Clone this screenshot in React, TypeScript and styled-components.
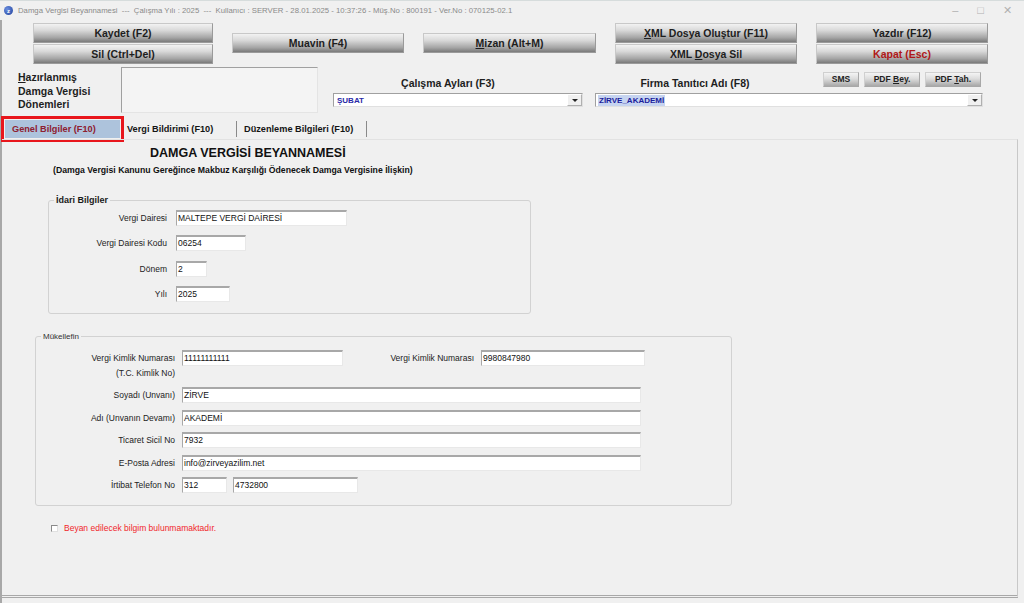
import React from "react";
import styled, { createGlobalStyle } from "styled-components";

const GlobalStyle = createGlobalStyle`
  html, body {
    margin: 0;
    padding: 0;
    background: #f0f0f0;
  }
  body {
    font-family: "Liberation Sans", Arial, sans-serif;
    color: #1a1a1a;
  }
  * {
    box-sizing: border-box;
  }
`;

const Window = styled.div`
  width: 1024px;
  height: 603px;
  background: #f0f0f0;
  display: flex;
  flex-direction: column;
  overflow: hidden;
`;

const TitleBar = styled.div`
  height: 20px;
  display: flex;
  align-items: center;
  padding: 0 4px;
  border-top: 1px solid #d6dcdc;
  font-size: 7.75px;
  color: #8a8a8a;
  > span.caption {
    margin-left: 5px;
  }
  > .controls {
    margin-left: auto;
    display: flex;
    gap: 19px;
    padding-right: 8px;
    color: #b0b0b0;
    font-size: 11px;
  }
`;

const AppIcon = styled.div`
  width: 9px;
  height: 9px;
  border-radius: 50%;
  background: radial-gradient(circle at 35% 35%, #6a8ee0, #1d3f9a);
  color: #fff;
  font-size: 6px;
  font-weight: bold;
  display: flex;
  align-items: center;
  justify-content: center;
`;

const Body = styled.div`
  flex: 1;
  display: flex;
  flex-direction: column;
  border-left: 2px solid #a8a8a8;
  min-height: 0;
`;

const Toolbar = styled.div`
  display: flex;
  align-items: center;
  gap: 19px;
  margin-top: 2px;
  padding-left: 31px;
  height: 42px;
`;

const ButtonStack = styled.div<{ $w: number }>`
  width: ${(p) => p.$w}px;
  display: flex;
  flex-direction: column;
  gap: 1px;
`;

const BigButton = styled.button<{ $danger?: boolean }>`
  height: 20px;
  width: 100%;
  border: 1px solid #9a9a9a;
  border-top-color: #c8c8c8;
  border-left-color: #c8c8c8;
  background: linear-gradient(to bottom, #f2f2f2 0%, #d9d9d9 35%, #a6a6a6 75%, #7a7a7a 100%);
  font-family: "Liberation Sans", Arial, sans-serif;
  font-weight: bold;
  font-size: 10.5px;
  color: ${(p) => (p.$danger ? "#b01818" : "#1e1e1e")};
  padding: 0;
  cursor: default;
`;

const SmallButton = styled.button<{ $w: number }>`
  width: ${(p) => p.$w}px;
  height: 15px;
  border: 1px solid #a8a8a8;
  border-top-color: #d0d0d0;
  border-left-color: #d0d0d0;
  background: linear-gradient(to bottom, #f4f4f4 0%, #dcdcdc 45%, #a8a8a8 100%);
  font-family: "Liberation Sans", Arial, sans-serif;
  font-weight: bold;
  font-size: 8.5px;
  color: #222;
  padding: 0;
`;

const HeaderRow = styled.div`
  display: flex;
  height: 46px;
  margin-top: 3px;
`;

const PeriodLabel = styled.div`
  width: 119px;
  padding-left: 16px;
  padding-top: 4px;
  font-weight: bold;
  font-size: 10.5px;
  line-height: 13.5px;
  color: #1e1e1e;
`;

const PeriodList = styled.div`
  width: 197px;
  height: 46px;
  background: #f4f4f4;
  border-top: 1px solid #a0a0a0;
  border-left: 1px solid #a0a0a0;
  border-right: 1px solid #e4e4e4;
  border-bottom: 1px solid #e4e4e4;
`;

const FieldBlock = styled.div<{ $w: number; $ml: number }>`
  width: ${(p) => p.$w}px;
  margin-left: ${(p) => p.$ml}px;
  display: flex;
  flex-direction: column;
`;

const BlockTop = styled.div`
  height: 26px;
  display: flex;
  align-items: center;
  padding-top: 6px;
`;

const BlockLabel = styled.div<{ $pr?: number }>`
  flex: 1;
  text-align: center;
  padding-right: ${(p) => p.$pr ?? 0}px;
  font-weight: bold;
  font-size: 10.5px;
  color: #1e1e1e;
`;

const SmallButtons = styled.div`
  display: flex;
  gap: 5px;
  margin-right: 2px;
  margin-top: -8px;
`;

const Select = styled.div`
  height: 14px;
  display: flex;
  align-items: stretch;
  background: #fff;
  border-top: 1px solid #a0a0a0;
  border-left: 1px solid #a0a0a0;
  border-right: 1px solid #e0e0e0;
  border-bottom: 1px solid #e0e0e0;
`;

const SelectValue = styled.div`
  flex: 1;
  display: flex;
  align-items: center;
  padding-left: 2px;
  > span {
    font-size: 8px;
    font-weight: bold;
    color: #2a2aa8;
    line-height: 11px;
    padding: 0 1px;
  }
  > span.selected {
    background: #c6d4f0;
    color: #1c1c9c;
  }
`;

const SelectArrow = styled.div`
  width: 15px;
  border: 1px solid #b0b0b0;
  border-top-color: #fff;
  border-left-color: #fff;
  background: #f0f0f0;
  display: flex;
  align-items: center;
  justify-content: center;
  &::after {
    content: "";
    border-left: 3px solid transparent;
    border-right: 3px solid transparent;
    border-top: 3px solid #222;
  }
`;

const TabStrip = styled.div`
  display: flex;
  align-items: center;
  height: 21px;
  margin-top: 5px;
  padding-left: 3px;
`;

const Tab = styled.div<{ $active?: boolean; $w: number }>`
  width: ${(p) => p.$w}px;
  margin-left: ${(p) => (p.$active ? 0 : 3)}px;
  height: ${(p) => (p.$active ? "18px" : "16px")};
  display: flex;
  align-items: center;
  padding-left: ${(p) => (p.$active ? "7px" : "4px")};
  font-weight: bold;
  font-size: 9.2px;
  color: ${(p) => (p.$active ? "#8e2030" : "#151515")};
  background: ${(p) => (p.$active ? "#adc3dc" : "transparent")};
  outline: ${(p) => (p.$active ? "3px solid #e8161c" : "none")};
  outline-offset: 1px;
  border-right: ${(p) => (p.$active ? "none" : "1px solid #8a8a8a")};
`;

const Panel = styled.div`
  flex: 1;
  margin-right: 6px;
  margin-bottom: 5px;
  border-top: 1px solid #e2e2e2;
  border-right: 1px solid #c8c8c8;
  border-bottom: 3px double #a8a8a8;
  display: flex;
  flex-direction: column;
  padding-top: 6px;
`;

const Heading = styled.div`
  padding-left: 148px;
  font-weight: bold;
  font-size: 12.5px;
  color: #111;
  line-height: 15px;
`;

const SubHeading = styled.div`
  padding-left: 51px;
  margin-top: 4px;
  font-weight: bold;
  font-size: 8.7px;
  color: #111;
`;

const Group = styled.fieldset<{ $w: number; $ml: number; $h: number; $mt: number }>`
  width: ${(p) => p.$w}px;
  height: ${(p) => p.$h}px;
  margin: ${(p) => p.$mt}px 0 0 ${(p) => p.$ml}px;
  padding: 4px 0 0 0;
  border: 1px solid #d2d2d2;
  border-radius: 3px;
  display: flex;
  flex-direction: column;
`;

const Legend = styled.legend<{ $bold?: boolean }>`
  margin-left: 5px;
  padding: 0 2px;
  font-size: ${(p) => (p.$bold ? "9px" : "8px")};
  font-weight: ${(p) => (p.$bold ? "bold" : "normal")};
  color: ${(p) => (p.$bold ? "#1a1a1a" : "#333")};
`;

const Row = styled.div<{ $lw: number; $gap: number; $h: number }>`
  display: grid;
  grid-template-columns: ${(p) => p.$lw}px auto auto 1fr;
  column-gap: ${(p) => p.$gap}px;
  height: ${(p) => p.$h}px;
  align-items: start;
`;

const Label = styled.div`
  text-align: right;
  font-size: 8.5px;
  line-height: 15px;
  color: #222;
  padding-top: 1px;
`;

const Input = styled.div<{ $w: number; $ml?: number }>`
  width: ${(p) => p.$w}px;
  margin-left: ${(p) => p.$ml ?? 0}px;
  height: 16px;
  background: #fff;
  border-top: 2px solid #a8a8a8;
  border-left: 1px solid #a8a8a8;
  border-right: 1px solid #e8e8e8;
  border-bottom: 1px solid #e8e8e8;
  font-size: 8.5px;
  line-height: 12px;
  padding-left: 1px;
  color: #111;
  white-space: nowrap;
  overflow: hidden;
`;

const CheckRow = styled.label`
  display: flex;
  align-items: center;
  gap: 6px;
  margin: 17px 0 0 49px;
  font-size: 8.5px;
  color: #f0262a;
`;

const CheckBox = styled.span`
  width: 7px;
  height: 7px;
  background: #fff;
  border-top: 1px solid #8a8a8a;
  border-left: 1px solid #8a8a8a;
  border-right: 1px solid #e0e0e0;
  border-bottom: 1px solid #e0e0e0;
`;

const adminRows = [
  { label: "Vergi Dairesi", value: "MALTEPE VERGİ DAİRESİ", w: 171 },
  { label: "Vergi Dairesi Kodu", value: "06254", w: 70 },
  { label: "Dönem", value: "2", w: 31 },
  { label: "Yılı", value: "2025", w: 54 },
];

const taxpayerRows = [
  { label: "Soyadı (Unvanı)", value: "ZİRVE" },
  { label: "Adı (Unvanın Devamı)", value: "AKADEMİ" },
  { label: "Ticaret Sicil No", value: "7932" },
  { label: "E-Posta Adresi", value: "info@zirveyazilim.net" },
];

export default function App() {
  return (
    <>
      <GlobalStyle />
      <Window>
        <TitleBar>
          <AppIcon>z</AppIcon>
          <span className="caption">
            Damga Vergisi Beyannamesi&nbsp; --- &nbsp;Çalışma Yılı : 2025&nbsp; --- &nbsp;Kullanıcı : SERVER - 28.01.2025 - 10:37:26 - Müş.No : 800191 - Ver.No : 070125-02.1
          </span>
          <div className="controls">
            <span>–</span>
            <span>□</span>
            <span>✕</span>
          </div>
        </TitleBar>
        <Body>
          <Toolbar>
            <ButtonStack $w={180}>
              <BigButton>Kaydet (F2)</BigButton>
              <BigButton>Sil (Ctrl+Del)</BigButton>
            </ButtonStack>
            <ButtonStack $w={172}>
              <BigButton>Muavin (F4)</BigButton>
            </ButtonStack>
            <ButtonStack $w={173}>
              <BigButton>
                <u>M</u>izan (Alt+M)
              </BigButton>
            </ButtonStack>
            <ButtonStack $w={182}>
              <BigButton>
                <u>X</u>ML Dosya Oluştur (F11)
              </BigButton>
              <BigButton>
                XML <u>D</u>osya Sil
              </BigButton>
            </ButtonStack>
            <ButtonStack $w={172}>
              <BigButton>Yazdır (F12)</BigButton>
              <BigButton $danger>Kapat (Esc)</BigButton>
            </ButtonStack>
          </Toolbar>

          <HeaderRow>
            <PeriodLabel>
              <u>H</u>azırlanmış
              <br />
              Damga Vergisi
              <br />
              Dönemleri
            </PeriodLabel>
            <PeriodList />
            <FieldBlock $w={250} $ml={15}>
              <BlockTop>
                <BlockLabel $pr={20}>Çalışma Ayları (F3)</BlockLabel>
              </BlockTop>
              <Select>
                <SelectValue>
                  <span>ŞUBAT</span>
                </SelectValue>
                <SelectArrow />
              </Select>
            </FieldBlock>
            <FieldBlock $w={388} $ml={12}>
              <BlockTop>
                <BlockLabel $pr={28}>Firma Tanıtıcı Adı (F8)</BlockLabel>
                <SmallButtons>
                  <SmallButton $w={36}>SMS</SmallButton>
                  <SmallButton $w={56}>
                    PDF <u>B</u>ey.
                  </SmallButton>
                  <SmallButton $w={56}>
                    PDF <u>T</u>ah.
                  </SmallButton>
                </SmallButtons>
              </BlockTop>
              <Select>
                <SelectValue>
                  <span className="selected">ZİRVE_AKADEMİ</span>
                </SelectValue>
                <SelectArrow />
              </Select>
            </FieldBlock>
          </HeaderRow>

          <TabStrip>
            <Tab $active $w={115}>
              Genel Bilgiler (F10)
            </Tab>
            <Tab $w={114}>Vergi Bildirimi (F10)</Tab>
            <Tab $w={127}>Düzenleme Bilgileri (F10)</Tab>
          </TabStrip>

          <Panel>
            <Heading>DAMGA VERGİSİ BEYANNAMESİ</Heading>
            <SubHeading>
              (Damga Vergisi Kanunu Gereğince Makbuz Karşılığı Ödenecek Damga Vergisine İlişkin)
            </SubHeading>

            <Group $w={483} $ml={46} $h={119} $mt={20}>
              <Legend $bold>İdari Bilgiler</Legend>
              {adminRows.map((r, i) => (
                <Row key={r.label} $lw={118} $gap={9} $h={25.3} style={i === 0 ? { marginTop: 1 } : undefined}>
                  <Label>{r.label}</Label>
                  <Input $w={r.w}>{r.value}</Input>
                </Row>
              ))}
            </Group>

            <Group $w={697} $ml={33} $h={174} $mt={18}>
              <Legend>Mükellefin</Legend>
              <Row $lw={139} $gap={7} $h={37} style={{ marginTop: 5 }}>
                <Label>
                  Vergi Kimlik Numarası
                  <br />
                  (T.C. Kimlik No)
                </Label>
                <Input $w={161}>11111111111</Input>
                <Row $lw={124} $gap={7} $h={16}>
                  <Label>Vergi Kimlik Numarası</Label>
                  <Input $w={164}>9980847980</Input>
                </Row>
              </Row>
              {taxpayerRows.map((r) => (
                <Row key={r.label} $lw={139} $gap={7} $h={22.6}>
                  <Label>{r.label}</Label>
                  <Input $w={459}>{r.value}</Input>
                </Row>
              ))}
              <Row $lw={139} $gap={7} $h={22}>
                <Label>İrtibat Telefon No</Label>
                <Input $w={45}>312</Input>
                <Input $w={125} $ml={-1}>4732800</Input>
              </Row>
            </Group>

            <CheckRow>
              <CheckBox />
              Beyan edilecek bilgim bulunmamaktadır.
            </CheckRow>
          </Panel>
        </Body>
      </Window>
    </>
  );
}
